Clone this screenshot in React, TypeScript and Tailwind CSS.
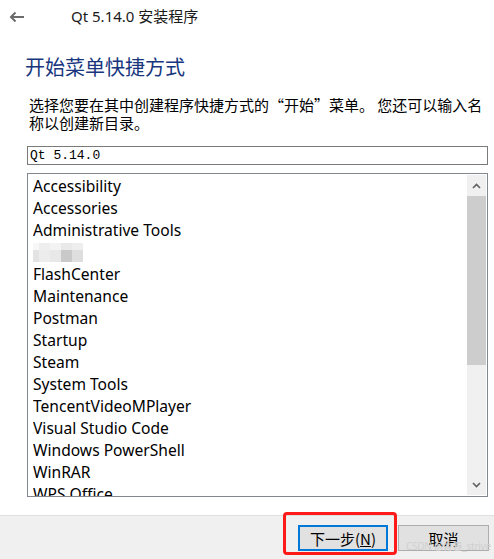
const items = [
  "Accessibility",
  "Accessories",
  "Administrative Tools",
  "",
  "FlashCenter",
  "Maintenance",
  "Postman",
  "Startup",
  "Steam",
  "System Tools",
  "TencentVideoMPlayer",
  "Visual Studio Code",
  "Windows PowerShell",
  "WinRAR",
  "WPS Office",
];

const mosaicTop = ["#f7f7f7", "#eeeeee", "#f3f3f3", "#e9e9e9", "#eeeeee"];
const mosaicBottom = ["#e3e3e3", "#ececec", "#e8e8e8", "#c9c9c9", "#dedede"];

function Mosaic() {
  return (
    <div className="flex flex-col ml-[-5px] pt-[2px]">
      <div className="flex">
        {mosaicTop.map((c, i) => (
          <div key={i} className="w-[11px] h-[7px]" style={{ backgroundColor: c }} />
        ))}
      </div>
      <div className="flex">
        {mosaicBottom.map((c, i) => (
          <div key={i} className="w-[11px] h-[12px]" style={{ backgroundColor: c }} />
        ))}
      </div>
    </div>
  );
}

function ScrollBar() {
  return (
    <div className="w-[21px] p-[1px] flex flex-col">
      <div className="h-[21px] bg-[#f0f0f0] flex items-center justify-center">
        <svg width="9" height="6" viewBox="0 0 9 6">
          <path d="M1 5 L4.5 1.5 L8 5" stroke="#606060" strokeWidth="1.6" fill="none" />
        </svg>
      </div>
      <div className="h-[169px] bg-[#cdcdcd]" />
      <div className="flex-1 bg-[#f0f0f0]" />
      <div className="h-[21px] bg-[#f0f0f0] flex items-center justify-center">
        <svg width="9" height="6" viewBox="0 0 9 6">
          <path d="M1 1 L4.5 4.5 L8 1" stroke="#606060" strokeWidth="1.6" fill="none" />
        </svg>
      </div>
    </div>
  );
}

export default function App() {
  return (
    <div
      className="w-[494px] h-[559px] bg-white flex flex-col overflow-hidden relative text-black"
      style={{ fontFamily: "'Noto Sans', 'Noto Sans CJK SC', sans-serif" }}
    >
      {/* title bar */}
      <div className="h-[33px] flex items-center">
        <svg className="ml-[9px]" width="16" height="12" viewBox="0 0 16 12">
          <path d="M15 6 H2 M6.5 1.5 L2 6 L6.5 10.5" stroke="#6b6b6b" strokeWidth="2" fill="none" />
        </svg>
        <span className="ml-[46px] text-[15px] leading-none text-[#1a1a1a]">Qt 5.14.0 安装程序</span>
      </div>

      <h1 className="mt-[22px] pl-[25px] h-[26px] text-[20px] leading-[26px] text-[#17367e] font-normal">
        开始菜单快捷方式
      </h1>

      <p
        className="mt-[15px] pl-[29px] text-[15px] leading-[18px] whitespace-nowrap"
        style={{ fontFamily: "'Noto Sans CJK SC', sans-serif" }}
      >
        选择您要在其中创建程序快捷方式的“开始”菜单。 您还可以输入名
        <br />
        称以创建新目录。
      </p>

      <div className="mt-[14px] ml-[27px] w-[461px] h-[19px] border border-[#7a7a7a] flex items-center pl-[2px]">
        <span className="text-[13px] leading-none" style={{ fontFamily: "'Liberation Mono', monospace" }}>
          Qt 5.14.0
        </span>
      </div>

      <div className="mt-[8px] ml-[27px] w-[461px] h-[324px] border border-[#828790] flex overflow-hidden">
        <div className="flex-1 pt-[1px] pl-[5px] overflow-hidden">
          {items.map((name, i) => (
            <div key={i} className="h-[22px] leading-[22px] text-[15.6px] whitespace-nowrap overflow-hidden">
              {name === "" ? <Mosaic /> : name}
            </div>
          ))}
        </div>
        <ScrollBar />
      </div>

      {/* footer */}
      <div className="mt-auto h-[44px] bg-[#f0f0f0] border-t border-[#dfdfdf] flex justify-end items-start pt-[9px] pr-[5px] gap-[10px]">
        <button className="w-[90px] h-[26px] bg-[#e1e1e1] border-2 border-[#0078d7] text-[15px] leading-none flex items-center justify-center" style={{ fontFamily: "'Noto Sans CJK SC', sans-serif" }}>
          下一步(<u>N</u>)
        </button>
        <button className="w-[91px] h-[26px] bg-[#e1e1e1] border border-[#adadad] text-[15px] leading-none flex items-center justify-center" style={{ fontFamily: "'Noto Sans CJK SC', sans-serif" }}>
          取消
        </button>
      </div>

      {/* annotation + watermark */}
      <div className="absolute left-[283px] top-[512px] w-[114px] h-[43px] border-[3px] border-[#ff1a1a] rounded-[4px]" />
      <div className="absolute left-[406px] top-[541px] text-[10px] leading-none text-[#d0d0d0] whitespace-nowrap tracking-tight">
        CSDN @青春_strive
      </div>
    </div>
  );
}
